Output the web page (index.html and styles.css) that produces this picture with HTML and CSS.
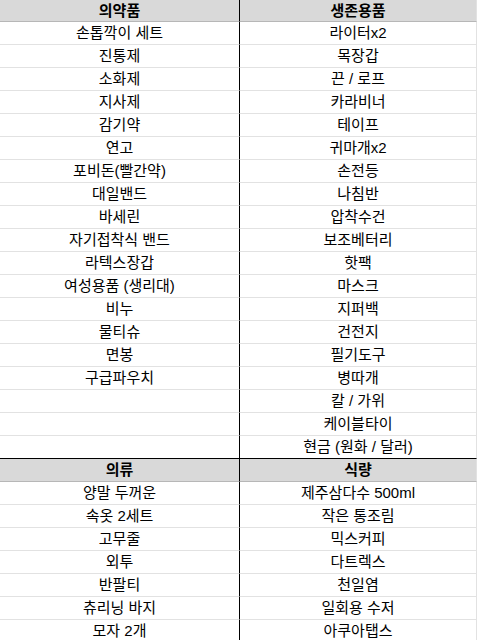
FILE: index.html
```html
<!DOCTYPE html>
<html lang="ko">
<head>
<meta charset="utf-8">
<link rel="stylesheet" href="styles.css">
</head>
<body>
<div class="sheet">
  <div class="cell head first l">의약품</div><div class="cell head first r">생존용품</div>
  <div class="cell l">손톱깍이 세트</div><div class="cell r">라이터x2</div>
  <div class="cell l">진통제</div><div class="cell r">목장갑</div>
  <div class="cell l">소화제</div><div class="cell r">끈 / 로프</div>
  <div class="cell l">지사제</div><div class="cell r">카라비너</div>
  <div class="cell l">감기약</div><div class="cell r">테이프</div>
  <div class="cell l">연고</div><div class="cell r">귀마개x2</div>
  <div class="cell l">포비돈(빨간약)</div><div class="cell r">손전등</div>
  <div class="cell l">대일밴드</div><div class="cell r">나침반</div>
  <div class="cell l">바세린</div><div class="cell r">압착수건</div>
  <div class="cell l">자기접착식 밴드</div><div class="cell r">보조베터리</div>
  <div class="cell l">라텍스장갑</div><div class="cell r">핫팩</div>
  <div class="cell l">여성용품 (생리대)</div><div class="cell r">마스크</div>
  <div class="cell l">비누</div><div class="cell r">지퍼백</div>
  <div class="cell l">물티슈</div><div class="cell r">건전지</div>
  <div class="cell l">면봉</div><div class="cell r">필기도구</div>
  <div class="cell l">구급파우치</div><div class="cell r">병따개</div>
  <div class="cell l"></div><div class="cell r">칼 / 가위</div>
  <div class="cell l"></div><div class="cell r">케이블타이</div>
  <div class="cell l end"></div><div class="cell r end">현금 (원화 / 달러)</div>
  <div class="cell head l">의류</div><div class="cell head r">식량</div>
  <div class="cell l">양말 두꺼운</div><div class="cell r">제주삼다수 500ml</div>
  <div class="cell l">속옷 2세트</div><div class="cell r">작은 통조림</div>
  <div class="cell l">고무줄</div><div class="cell r">믹스커피</div>
  <div class="cell l">외투</div><div class="cell r">다트렉스</div>
  <div class="cell l">반팔티</div><div class="cell r">천일염</div>
  <div class="cell l">츄리닝 바지</div><div class="cell r">일회용 수저</div>
  <div class="cell l">모자 2개</div><div class="cell r">아쿠아탭스</div>
</div>
</body>
</html>
```
FILE: styles.css
```css
html, body {
  margin: 0;
  padding: 0;
  background: #ffffff;
}
.sheet {
  display: grid;
  grid-template-columns: 240px 237px;
  width: 477px;
  font-family: "Liberation Sans", "Noto Sans CJK KR", sans-serif;
  font-size: 15px;
  color: #000000;
}
.cell {
  height: 22px;
  line-height: 22px;
  text-align: center;
  border-bottom: 1px solid #e2e2e2;
  white-space: nowrap;
  overflow: hidden;
}
.l {
  border-right: 1px solid #000000;
}
.r {
  border-right: 1px solid #e2e2e2;
}
.head {
  background: #d9d9d9;
  font-weight: bold;
  border-bottom-color: #b7b7b7;
}
.head.first {
  height: 21px;
  line-height: 21px;
}
.end {
  border-bottom-color: #000000;
}
```
